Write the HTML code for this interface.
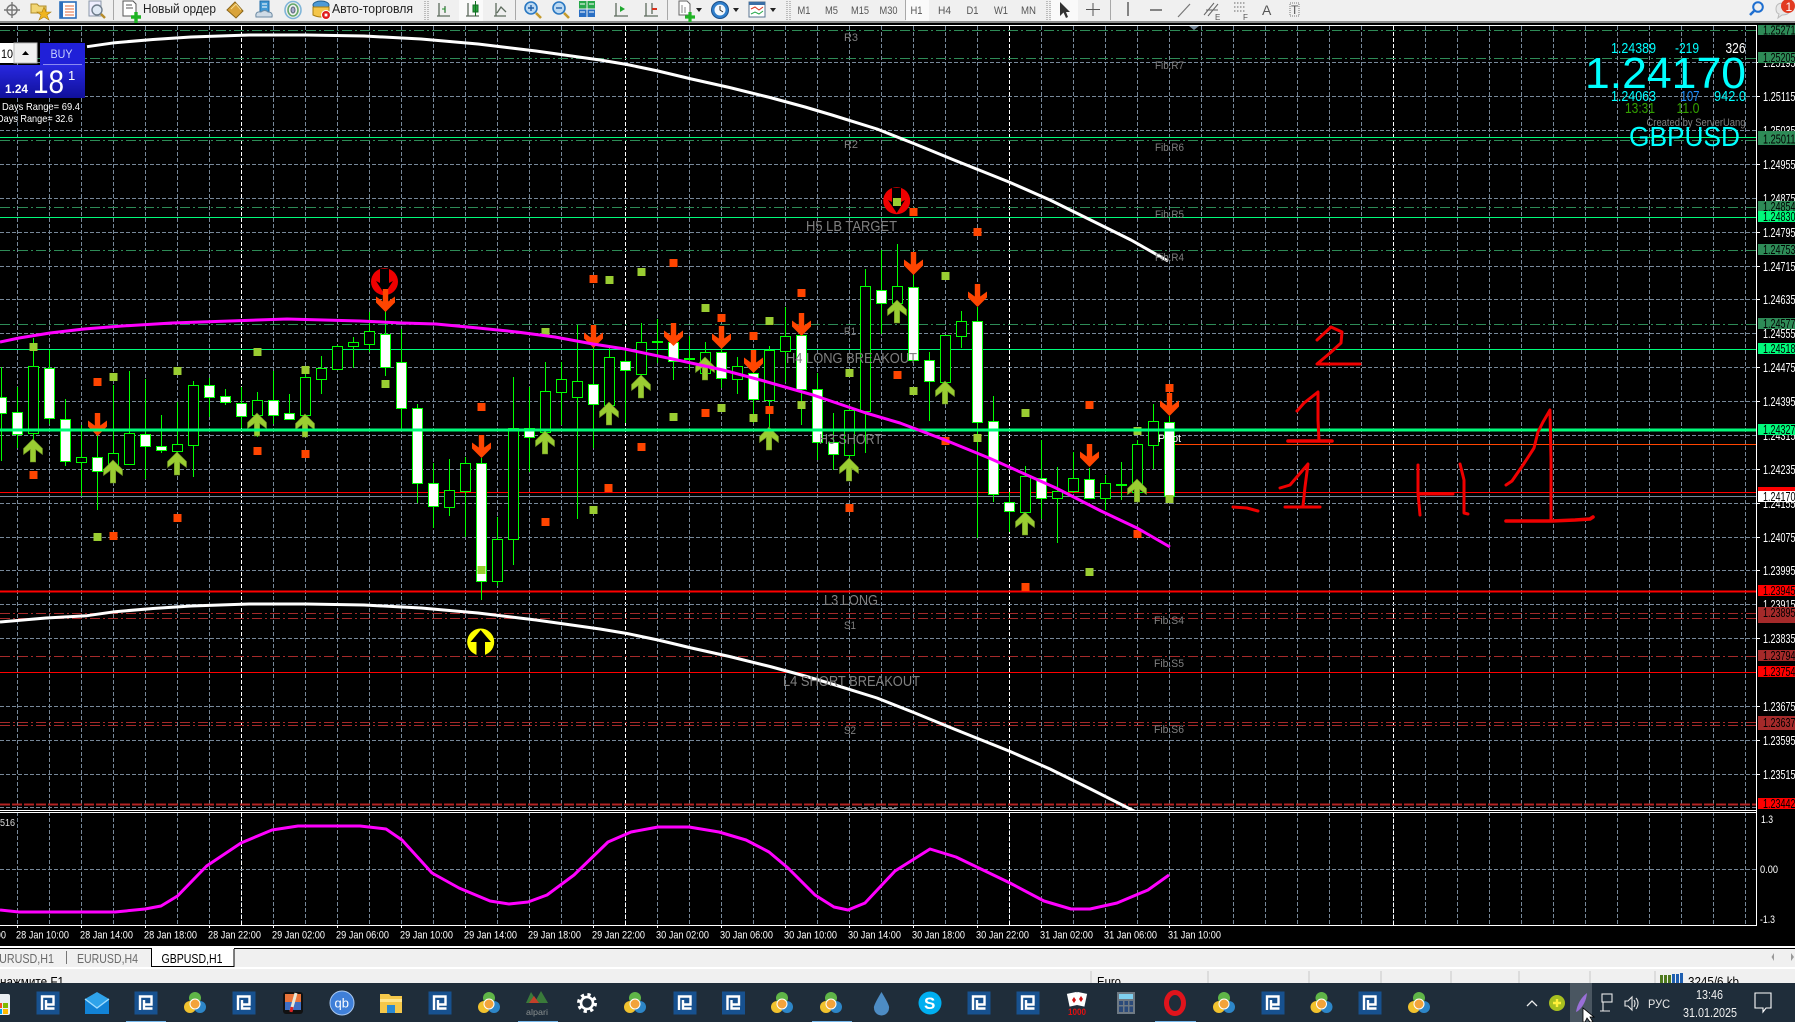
<!DOCTYPE html>
<html lang="ru">
<head>
<meta charset="utf-8">
<title>GBPUSD,H1</title>
<style>
html,body{margin:0;padding:0;background:#000;width:1795px;height:1022px;overflow:hidden}
svg{display:block}
text{font-family:"Liberation Sans","DejaVu Sans",sans-serif}
.p{fill:#fff;font-size:13px}
.b{fill:#000;font-size:13px}
.t{fill:#fff;font-size:11px}
.g{fill:#808080;font-size:11px}
.h{fill:#808080;font-size:15px}
.tb{fill:#222;font-size:13px}
.tf{fill:#555;font-size:11px}
</style>
</head>
<body>
<svg xmlns="http://www.w3.org/2000/svg" width="1795" height="1022" viewBox="0 0 1795 1022">
<defs>
<pattern id="vg" x="17" y="26" width="32" height="6" patternUnits="userSpaceOnUse"><rect width="1" height="4" fill="#778899"/></pattern>
<clipPath id="cc"><rect x="0" y="26" width="1756" height="784"/></clipPath>
<path id="dn" d="M-2.7 0H2.700V12.500L9.500 7.500V13.500L0 23L-9.500 13.500V7.500L-2.700 12.500Z" fill="#ff4500"/>
<path id="up" d="M-2.700 23H2.700V10.500L9.500 15.500V9.500L0 0L-9.500 9.500V15.500L-2.700 10.500Z" fill="#9acd32" stroke="#6b8e23" stroke-width=".6"/>
<rect id="og" x="-4" y="-4" width="8" height="8" fill="#ff4500"/>
<rect id="gr" x="-4" y="-4" width="8" height="8" fill="#9acd32"/>
<g id="rf"><rect x="-11.500" y="-11.500" width="23" height="23" fill="#17518f"/><path d="M-6 7V-6.500H5.500V1.500H-2M-2 -3V5.500H6.500" fill="none" stroke="#fff" stroke-width="2.400"/></g>
<g id="mt"><circle cx="0" cy="-5" r="6" fill="#5fb547"/><circle cx="-5" cy="4" r="6" fill="#f1c22e"/><circle cx="5" cy="4" r="6" fill="#2d86c8"/><circle cx="0" cy="1" r="5" fill="#f2a33a" stroke="#fff" stroke-width="1"/></g>
</defs>

<!-- toolbar -->
<rect x="0" y="0" width="1795" height="21" fill="#f0f0f0"/>
<rect x="0" y="21" width="1795" height="2" fill="#8a8a8a"/>
<rect x="459" y="0" width="24" height="21" fill="#fafafa"/>
<rect x="906" y="0" width="23" height="21" fill="#fafafa"/>
<rect x="1051" y="0" width="27" height="21" fill="#fafafa"/>
<g fill="none" stroke="#a8a8a8"><path d="M113.500 0V20M515.500 0V20M667.500 0V20M905.500 0V20M1110.500 0V20"/><path d="M425 1V20M428 1V20M787 1V20M790 1V20M1047 1V20M1050 1V20" stroke-dasharray="1 1" stroke="#888"/></g>
<g transform="translate(12,10)" fill="none" stroke="#777" stroke-width="1.400"><circle r="5"/><path d="M-8 0H8M0 -8V8"/></g>
<g transform="translate(40,10)"><path d="M-9 -6H-3L-1 -4H6V3H-9Z" fill="#f2d675" stroke="#b08d2a"/><path d="M4 -3L6 2L11 2L7 5L9 10L4 7L-1 10L1 5L-3 2L2 2Z" fill="#f0b51f" stroke="#a97d10" stroke-width=".6"/></g>
<g transform="translate(68,10)"><rect x="-8" y="-8" width="16" height="16" fill="#fff" stroke="#2a6ebb" stroke-width="1.600"/><rect x="-8" y="-8" width="3" height="16" fill="#2a6ebb"/><path d="M-3 -4H6M-3 -1H6M-3 2H6M-3 5H6" stroke="#e06a3b"/></g>
<g transform="translate(97,10)"><rect x="-8" y="-9" width="12" height="15" fill="#eef" stroke="#8a97a8"/><circle cx="0" cy="0" r="5" fill="#dfe9f5" stroke="#6f7d8c" stroke-width="1.400"/><path d="M4 4L8 8" stroke="#b68b2a" stroke-width="2.400"/></g>
<g transform="translate(130,10)"><path d="M-7 -9H3L6 -6V6H-7Z" fill="#fff" stroke="#555"/><path d="M-4 -5H2M-4 -2H3" stroke="#555"/><path d="M1 7H11M6 2V13" stroke="#1fb324" stroke-width="3.400"/></g>
<text x="143" y="13" class="tb" textLength="73" lengthAdjust="spacingAndGlyphs">Новый ордер</text>
<g transform="translate(235,10)"><path d="M-8 0L0 -8L8 1L1 8Z" fill="#d9a33a" stroke="#8a6518"/><path d="M-4 -1L1 -6L6 0" fill="none" stroke="#f6dc90"/></g>
<g transform="translate(264,9)"><path d="M-4 -8H5V4H-4Z" fill="#3f98d4" stroke="#1f6ca8"/><path d="M-2 -5H3M-2 -2H3" stroke="#fff"/><path d="M-8 8Q-9 2 -3 3Q1 0 4 3Q9 3 8 8Z" fill="#cfdbe6" stroke="#6c8aa3"/></g>
<g transform="translate(293,10)" fill="none"><ellipse rx="8" ry="8.500" stroke="#7fb5d8" stroke-width="1.600"/><ellipse rx="5" ry="6" stroke="#66a86a" stroke-width="1.600"/><ellipse rx="2" ry="3" fill="#aac" stroke="#567"/></g>
<g transform="translate(321,9)"><ellipse rx="8" ry="4" cy="-4" fill="#4d9ad6" stroke="#23608f"/><path d="M-8 -2H8V6Q0 10 -8 6Z" fill="#f4c64a" stroke="#a97d10"/><circle cx="5" cy="6" r="4.500" fill="#e01b1b" stroke="#fff"/><rect x="3.600" y="4.600" width="2.800" height="2.800" fill="#fff"/></g>
<text x="332" y="13" class="tb" textLength="81" lengthAdjust="spacingAndGlyphs">Авто-торговля</text>
<g fill="none" stroke="#5d6b5d" stroke-width="1.300">
<path d="M437 16H450M439 3V16M445 6V13"/><path d="M466 16H479M468 3V16"/><path d="M494 16H506M496 3V16M497 13L501 7L506 12"/>
<path d="M614 16H628M616 3V16"/><path d="M644 16H658M646 3V16M652 3V14"/></g>
<path d="M445 7V12M442 9H445" stroke="#1f8a2a" fill="none"/>
<rect x="473" y="5" width="5" height="7" fill="#23a33a" stroke="#136b22"/><path d="M475.500 1V16" stroke="#136b22"/>
<path d="M620 6L625 9L620 12Z" fill="#1fa82f"/><path d="M652 9H657" stroke="#d9331f" stroke-width="2"/>
<g transform="translate(532,9)"><circle cx="-1" cy="-1" r="6" fill="#bcd9f2" stroke="#2a78c2" stroke-width="1.600"/><path d="M-4 -1H2M-1 -4V2" stroke="#1f5fa8" stroke-width="1.400"/><path d="M4 4L9 9" stroke="#c49a2d" stroke-width="2.600"/></g>
<g transform="translate(560,9)"><circle cx="-1" cy="-1" r="6" fill="#bcd9f2" stroke="#2a78c2" stroke-width="1.600"/><path d="M-4 -1H2" stroke="#1f5fa8" stroke-width="1.400"/><path d="M4 4L9 9" stroke="#c49a2d" stroke-width="2.600"/></g>
<g transform="translate(587,9)"><rect x="-8" y="-8" width="7.500" height="7.500" fill="#27a84a"/><rect x=".5" y="-8" width="7.500" height="7.500" fill="#27a84a"/><rect x="-8" y=".5" width="7.500" height="7.500" fill="#2a6fc4"/><rect x=".5" y=".5" width="7.500" height="7.500" fill="#2a6fc4"/><path d="M-7 -5H-2M2 -5H7M-7 3H-2M2 3H7" stroke="#fff"/></g>
<g transform="translate(685,9)"><path d="M-6 -8H2L5 -5V6H-6Z" fill="#fff" stroke="#666"/><path d="M-3 -4V4M0 -2V4" stroke="#888"/><path d="M0 8H10M5 3V13" stroke="#1fb324" stroke-width="3.200"/></g>
<path d="M696 8H702L699 12Z" fill="#222"/>
<g transform="translate(720,10)"><circle r="8.500" fill="#2f7fcc" stroke="#1b4f8a"/><circle r="5.500" fill="#f4f8fc"/><path d="M0 -4V0L3 2" stroke="#333" fill="none"/></g>
<path d="M733 8H739L736 12Z" fill="#222"/>
<g transform="translate(757,10)"><rect x="-8" y="-8" width="16" height="15" fill="#fff" stroke="#5a7590"/><rect x="-8" y="-8" width="16" height="3" fill="#3a6ea5"/><path d="M-6 -1L-2 -3L2 0L6 -3" stroke="#d9331f" fill="none"/><path d="M-6 4L-2 2L2 4L6 1" stroke="#27a84a" fill="none"/></g>
<path d="M770 8H776L773 12Z" fill="#222"/>
<text x="797.500" y="14" class="tf" textLength="13" lengthAdjust="spacingAndGlyphs">M1</text>
<text x="825" y="14" class="tf" textLength="13" lengthAdjust="spacingAndGlyphs">M5</text>
<text x="851" y="14" class="tf" textLength="18" lengthAdjust="spacingAndGlyphs">M15</text>
<text x="879.500" y="14" class="tf" textLength="18" lengthAdjust="spacingAndGlyphs">M30</text>
<text x="910.500" y="14" class="tf" textLength="12" lengthAdjust="spacingAndGlyphs">H1</text>
<text x="938" y="14" class="tf" textLength="13" lengthAdjust="spacingAndGlyphs">H4</text>
<text x="966.500" y="14" class="tf" textLength="12" lengthAdjust="spacingAndGlyphs">D1</text>
<text x="994" y="14" class="tf" textLength="14" lengthAdjust="spacingAndGlyphs">W1</text>
<text x="1021" y="14" class="tf" textLength="15" lengthAdjust="spacingAndGlyphs">MN</text>
<path d="M1060 2V16L1063.500 12.500L1066 18L1068 17L1066 12H1070Z" fill="#333"/>
<path d="M1093 3V16M1086 9.500H1100" stroke="#555" fill="none"/>
<path d="M1128 2V16" stroke="#555" stroke-width="1.400"/>
<path d="M1150 10H1162" stroke="#555" stroke-width="1.400"/>
<path d="M1178 17L1190 4" stroke="#777" stroke-width="1.200"/>
<path d="M1204 15L1214 3M1208 16L1218 4M1206 10L1218 10" stroke="#666" fill="none"/><text x="1215" y="20" fill="#555" font-size="8">E</text>
<path d="M1234 3H1246M1234 7H1246M1234 11H1246" stroke="#666" stroke-dasharray="1.500 1.500"/><text x="1243" y="20" fill="#555" font-size="8">F</text>
<text x="1262" y="15" fill="#555" font-size="14">A</text>
<rect x="1290" y="3" width="9" height="13" fill="none" stroke="#777" stroke-dasharray="1 1"/><text x="1291" y="14" fill="#555" font-size="12">T</text>
<g transform="translate(1757,8)"><circle cx="1" cy="-1" r="4.800" fill="none" stroke="#1f6fd0" stroke-width="2"/><path d="M-3 3L-7 7" stroke="#1f6fd0" stroke-width="2.600"/></g>
<path d="M1776 9Q1776 3 1783 3Q1790 3 1790 9Q1790 15 1782 15L1778 18L1779 14Q1776 13 1776 9Z" fill="#e8e8e8" stroke="#bbb"/>
<circle cx="1788" cy="6" r="7" fill="#e23b22"/><text x="1785.500" y="11" fill="#fff" font-size="12">1</text>

<!-- chart -->
<rect x="0" y="23" width="1795" height="925" fill="#000"/>
<rect x="0" y="26" width="1756" height="784" fill="url(#vg)"/>
<rect x="0" y="813" width="1756" height="112" fill="url(#vg)"/>
<g stroke="#fff" stroke-dasharray="4 2"><path d="M241.500 26V810M625.500 26V810M1009.500 26V810M1393.500 26V810M241.500 813V925M625.500 813V925M1009.500 813V925M1393.500 813V925"/></g>
<path d="M0 62.500H1756M0 96.500H1756M0 130.500H1756M0 164.500H1756M0 198.500H1756M0 232.500H1756M0 266.500H1756M0 299.500H1756M0 333.500H1756M0 367.500H1756M0 401.500H1756M0 435.500H1756M0 469.500H1756M0 503.500H1756M0 537.500H1756M0 570.500H1756M0 604.500H1756M0 638.500H1756M0 672.500H1756M0 706.500H1756M0 740.500H1756M0 774.500H1756M0 807.500H1756M0 869.500H1756" stroke="#778899" stroke-dasharray="4 2" fill="none"/>
<g fill="none" stroke="#2e8b57" stroke-dasharray="10 3 2 3"><path d="M0 30.500H1756M0 58.500H1756M0 140.500H1756M0 207.500H1756M0 250.500H1756M0 324.500H1756"/></g>
<g fill="none" stroke="#00fa7a"><path d="M0 137.500H1756M0 217.500H1756M0 349.500H1756"/></g>
<path d="M1174 444.500H1756" stroke="#ff4500" fill="none"/>
<path d="M0 492.500H1756" stroke="#ff0000" fill="none"/>
<path d="M0 496.500H1756" stroke="#778899" fill="none"/>
<path d="M0 672.500H1756" stroke="#ff0000" fill="none"/>
<path d="M0 591.500H1756" stroke="#ff0000" stroke-width="2" fill="none"/>
<g fill="none" stroke="#a52a2a" stroke-dasharray="10 3 2 3"><path d="M0 613.500H1756M0 618.500H1756M0 656.500H1756M0 722.500H1756M0 725.500H1756"/></g>
<path d="M0 804.500H1756" stroke="#b22222" stroke-width="2" stroke-dasharray="10 2" fill="none"/>
<path d="M0 810.500H1756M0 812.500H1756M0 925.500H1757M0 25.500H1757M1756.500 25V925" stroke="#fff" fill="none"/>
<path d="M1189 26H1199L1194 30Z" fill="#778899"/>

<!-- candles: wicks -->
<path stroke="#00ff00" fill="none" d="M1.500 367V461M17.500 387V448M33.500 338V440M49.500 350V424M65.500 399V466M81.500 425V496M97.500 433V510M113.500 385V473M129.500 371V464M145.500 379V479M161.500 415V453M177.500 402V457M193.500 381V477M209.500 378V417M225.500 389V405M241.500 387V428M257.500 392V437M273.500 371V424M289.500 394V419M305.500 366V437M321.500 356V394M337.500 345V369M353.500 337V368M369.500 312V352M385.500 305V376M401.500 329V430M417.500 404V503M433.500 463V528M449.500 459V516M465.500 457V537M481.500 458V600M497.500 517V586M513.500 377V565M529.500 387V472M545.500 362V453M561.500 362V425M577.500 325V519M593.500 348V448M609.500 345V425M625.500 350V423M641.500 323V393M657.500 319V363M673.500 333V380M689.500 336V370M705.500 342V380M721.500 340V388M737.500 357V394M753.500 350V423M769.500 346V427M785.500 307V382M801.500 327V425M817.500 373V460M833.500 413V470M849.500 405V470M865.500 269V453M881.500 250V334M897.500 244V313M913.500 275V360M929.500 352V421M945.500 335V403M961.500 311V348M977.500 307V538M993.500 396V502M1009.500 492V532M1025.500 466V512M1041.500 440V519M1057.500 467V543M1073.500 452V493M1089.500 468V498M1105.500 475V510M1121.500 462V500M1137.500 440V500M1153.500 404V469M1169.500 416V497"/>
<path fill="#fff" stroke="#00ff00" d="M-3.500 397.500h10v16h-10zM12.500 412.500h10v22h-10zM44.500 368.500h10v50h-10zM60.500 419.500h10v42h-10zM92.500 457.500h10v14h-10zM140.500 434.500h10v12h-10zM156.500 446.500h10v4h-10zM204.500 385.500h10v12h-10zM220.500 396.500h10v6h-10zM236.500 403.500h10v13h-10zM268.500 400.500h10v15h-10zM284.500 413.500h10v6h-10zM380.500 334.500h10v33h-10zM396.500 362.500h10v46h-10zM412.500 408.500h10v75h-10zM428.500 483.500h10v23h-10zM476.500 463.500h10v118h-10zM524.500 428.500h10v9h-10zM588.500 384.500h10v20h-10zM620.500 361.500h10v9h-10zM668.500 342.500h10v19h-10zM716.500 352.500h10v26h-10zM748.500 373.500h10v26h-10zM796.500 335.500h10v54h-10zM812.500 389.500h10v53h-10zM828.500 442.500h10v12h-10zM876.500 290.500h10v13h-10zM908.500 287.500h10v73h-10zM924.500 360.500h10v21h-10zM972.500 321.500h10v101h-10zM988.500 421.500h10v73h-10zM1004.500 502.500h10v9h-10zM1036.500 478.500h10v20h-10zM1084.500 479.500h10v19h-10zM1164.500 422.500h10v74h-10z"/>
<path fill="#000" stroke="#00ff00" d="M28.500 366.500h10v67h-10zM76.500 457.500h10v5h-10zM108.500 453.500h10v17h-10zM124.500 433.500h10v31h-10zM172.500 444.500h10v7h-10zM188.500 385.500h10v60h-10zM252.500 400.500h10v15h-10zM300.500 377.500h10v38h-10zM316.500 368.500h10v11h-10zM332.500 346.500h10v23h-10zM348.500 342.500h10v4h-10zM364.500 331.500h10v13h-10zM444.500 490.500h10v17h-10zM460.500 463.500h10v28h-10zM492.500 539.500h10v42h-10zM508.500 428.500h10v111h-10zM540.500 391.500h10v41h-10zM556.500 379.500h10v13h-10zM572.500 381.500h10v16h-10zM604.500 357.500h10v48h-10zM636.500 342.500h10v32h-10zM652.500 341.500h10v1h-10zM684.500 358.500h10v1h-10zM700.500 352.500h10v21h-10zM732.500 366.500h10v13h-10zM764.500 350.500h10v50h-10zM780.500 336.500h10v15h-10zM844.500 410.500h10v45h-10zM860.500 286.500h10v125h-10zM892.500 286.500h10v17h-10zM940.500 335.500h10v47h-10zM956.500 321.500h10v15h-10zM1020.500 476.500h10v36h-10zM1052.500 491.500h10v7h-10zM1068.500 478.500h10v13h-10zM1100.500 483.500h10v15h-10zM1116.500 484.500h10v1h-10zM1132.500 444.500h10v48h-10zM1148.500 421.500h10v24h-10z"/>

<!-- dots -->
<g>
<use href="#gr" x="33.500" y="347"/><use href="#gr" x="257.500" y="352"/><use href="#gr" x="113.500" y="377"/><use href="#gr" x="177.500" y="371"/><use href="#gr" x="305.500" y="370"/><use href="#gr" x="385.500" y="384"/><use href="#gr" x="97.500" y="537"/><use href="#gr" x="545.500" y="332"/><use href="#gr" x="481.500" y="570"/><use href="#gr" x="593.500" y="510"/><use href="#gr" x="609.500" y="280"/><use href="#gr" x="641.500" y="272"/><use href="#gr" x="945.500" y="276"/><use href="#gr" x="705.500" y="308"/><use href="#gr" x="769.500" y="321"/><use href="#gr" x="849.500" y="373"/><use href="#gr" x="913.500" y="391"/><use href="#gr" x="721.500" y="408"/><use href="#gr" x="673.500" y="417"/><use href="#gr" x="753.500" y="418"/><use href="#gr" x="801.500" y="405"/><use href="#gr" x="1025.500" y="413"/><use href="#gr" x="1137.500" y="431"/><use href="#gr" x="977.500" y="438"/><use href="#gr" x="1089.500" y="572"/><use href="#gr" x="1169.500" y="499"/>
<use href="#og" x="97.500" y="382"/><use href="#og" x="257.500" y="451"/><use href="#og" x="305.500" y="454"/><use href="#og" x="481.500" y="407"/><use href="#og" x="33.500" y="475"/><use href="#og" x="177.500" y="518"/><use href="#og" x="113.500" y="536"/><use href="#og" x="545.500" y="522"/><use href="#og" x="608.500" y="488"/><use href="#og" x="913.500" y="212"/><use href="#og" x="977.500" y="232"/><use href="#og" x="673.500" y="263"/><use href="#og" x="593.500" y="279"/><use href="#og" x="801.500" y="293"/><use href="#og" x="721.500" y="318"/><use href="#og" x="753.500" y="336"/><use href="#og" x="897.500" y="375"/><use href="#og" x="705.500" y="413"/><use href="#og" x="769.500" y="410"/><use href="#og" x="641.500" y="447"/><use href="#og" x="1089.500" y="405"/><use href="#og" x="1169.500" y="388"/><use href="#og" x="945.500" y="441"/><use href="#og" x="1137.500" y="534"/><use href="#og" x="1025.500" y="587"/><use href="#og" x="849.500" y="508"/>
</g>

<!-- circles -->
<circle cx="384.500" cy="281.700" r="13.500" fill="#f00000"/><path d="M380 269H389V283L393 281L384.500 294L376 281L380 283Z" fill="#000"/>
<circle cx="896.700" cy="200.700" r="13.500" fill="#f00000"/><path d="M892 188H901V202L905 200L896.700 213L888 200L892 202Z" fill="#000"/>
<use href="#gr" x="897" y="202"/>
<circle cx="480.700" cy="642" r="13.500" fill="#ffff00"/><path d="M476.500 656V642H470.500L480.700 630L491 642H485V656Z" fill="#000"/>

<!-- arrows -->
<g>
<use href="#dn" x="97.500" y="413"/><use href="#dn" x="385.500" y="289"/><use href="#dn" x="481.500" y="435"/><use href="#dn" x="593.500" y="325"/><use href="#dn" x="673.500" y="323"/><use href="#dn" x="721.500" y="326"/><use href="#dn" x="753.500" y="350"/><use href="#dn" x="801.500" y="313"/><use href="#dn" x="913.500" y="252"/><use href="#dn" x="977.500" y="284"/><use href="#dn" x="1089.500" y="444"/><use href="#dn" x="1169.500" y="393"/>
<use href="#up" x="33" y="439"/><use href="#up" x="113" y="460"/><use href="#up" x="177" y="452"/><use href="#up" x="257" y="413"/><use href="#up" x="305" y="414"/><use href="#up" x="545" y="431"/><use href="#up" x="609" y="402"/><use href="#up" x="641" y="375"/><use href="#up" x="705" y="357"/><use href="#up" x="769" y="427"/><use href="#up" x="849" y="458"/><use href="#up" x="897" y="300"/><use href="#up" x="945" y="381"/><use href="#up" x="1025" y="512"/><use href="#up" x="1137" y="479"/>
</g>

<path d="M0 430H1756" stroke="#00fa7a" stroke-width="3" fill="none"/>

<!-- curves -->
<g clip-path="url(#cc)" fill="none" stroke-linejoin="round">
<polyline stroke="#fff" stroke-width="3" points="87,46.700 115,42.700 153,39.500 191,37 249,35 306,35 364,36 421,39 478,44 536,51 600,60 627,64.500 658,71 691.500,79 729.500,87.500 770,97.500 805,107 832,115 877,129 915,144 954,160 1009,182 1050,200 1090.600,220 1131,240 1168,261"/>
<polyline stroke="#fff" stroke-width="3" points="0,622 46,618 87,615.700 115,611.700 153,608.500 191,606 249,604 306,604 364,605 421,608 478,613 536,620 600,629 627,633.500 658,640 691.500,648 729.500,656.500 770,666.500 805,676 832,684 877,698 915,713 954,729 1009,751 1050,769 1090.600,789 1140,814"/>
<polyline stroke="#ff00ff" stroke-width="3" points="0,342 19,338 50,333 84,329 122,326 172,323 230,321 287,319 360,321 402,323 436,324 478,328 517,332 555,337 593,344 625,349 682,361 723,370 764,381 813,395 866,413 900,423 945,440 989,458 1056,488 1101,511 1137,528 1170,547"/>
</g>
<polyline fill="none" stroke="#ff00ff" stroke-width="3" stroke-linejoin="round" points="0,910 19,912 115,912 145,909 161,906 177.500,896 206.600,866 241,843 272,830 298,826 360,826 386,829 402,840 432,873 459,888 490,901 509,904 528,902 547,895 574,875 608,842 631,832 658,827 689,827 719,832 746,840 769,852 788,868 815,895 834,907 848,910 865,903 895,871 930,849 956,857 1010,883 1044,901 1071,909 1090,909 1117,903 1148,890 1169,875"/>

<!-- chart text labels -->
<g clip-path="url(#cc)">
<text x="844" y="41" class="g" textLength="14" lengthAdjust="spacingAndGlyphs">R3</text>
<text x="1155" y="69" class="g" textLength="29" lengthAdjust="spacingAndGlyphs">Fib.R7</text>
<text x="844" y="148" class="g" textLength="14" lengthAdjust="spacingAndGlyphs">R2</text>
<text x="1155" y="151" class="g" textLength="29" lengthAdjust="spacingAndGlyphs">Fib.R6</text>
<text x="1155" y="218" class="g" textLength="29" lengthAdjust="spacingAndGlyphs">Fib.R5</text>
<text x="806" y="231" class="h" textLength="91" lengthAdjust="spacingAndGlyphs">H5 LB TARGET</text>
<text x="1155" y="261" class="g" textLength="29" lengthAdjust="spacingAndGlyphs">Fib.R4</text>
<text x="844" y="335" class="g" textLength="12" lengthAdjust="spacingAndGlyphs">R1</text>
<text x="786" y="363" class="h" textLength="131" lengthAdjust="spacingAndGlyphs">H4 LONG BREAKOUT</text>
<text x="819" y="444" class="h" textLength="63" lengthAdjust="spacingAndGlyphs">H3 SHORT</text>
<text x="1158" y="442" fill="#fff" font-size="11" textLength="23" lengthAdjust="spacingAndGlyphs">Pivot</text>
<text x="824" y="605" class="h" textLength="54" lengthAdjust="spacingAndGlyphs">L3 LONG</text>
<text x="844" y="629" class="g" textLength="12" lengthAdjust="spacingAndGlyphs">S1</text>
<text x="1154" y="624" class="g" textLength="30" lengthAdjust="spacingAndGlyphs">Fib.S4</text>
<text x="1154" y="667" class="g" textLength="30" lengthAdjust="spacingAndGlyphs">Fib.S5</text>
<text x="783" y="686" class="h" textLength="137" lengthAdjust="spacingAndGlyphs">L4 SHORT BREAKOUT</text>
<text x="844" y="734" class="g" textLength="12" lengthAdjust="spacingAndGlyphs">S2</text>
<text x="1154" y="733" class="g" textLength="30" lengthAdjust="spacingAndGlyphs">Fib.S6</text>
<text x="806" y="818" class="h" textLength="91" lengthAdjust="spacingAndGlyphs">L5 LB TARGET</text>
<text x="1154" y="818" class="g" textLength="30" lengthAdjust="spacingAndGlyphs">Fib.S7</text>
</g>

<!-- handwritten -->
<g fill="none" stroke="#f00000" stroke-width="3" stroke-linecap="round" stroke-linejoin="round">
<path d="M1317 340L1331 327L1342 332L1341 343L1330 353L1317 364L1340 364L1360 364"/>
<path d="M1297 411L1304 403L1318 392L1318 420L1319 441"/><path d="M1288 441H1332" stroke-width="3.600"/>
<path d="M1233 507L1247 508L1258 511"/>
<path d="M1280 488L1290 485L1308 464L1305 487L1303 506"/><path d="M1285 507H1320"/>
<path d="M1418 465V493L1420 515"/><path d="M1418 494H1453"/><path d="M1460 464L1464 480V505L1464 513L1468 514"/>
<path d="M1506 485L1512 481L1523 465L1534 448L1538 432L1543 422L1550 410L1551 460L1551 520"/><path d="M1506 521H1552L1575 520L1590 519L1593 517" stroke-width="3.600"/>
</g>

<!-- right axis labels -->
<text x="1763" y="67" class="p" textLength="32.500" lengthAdjust="spacingAndGlyphs">1.25195</text>
<text x="1763" y="101" class="p" textLength="32.500" lengthAdjust="spacingAndGlyphs">1.25115</text>
<text x="1763" y="135" class="p" textLength="32.500" lengthAdjust="spacingAndGlyphs">1.25035</text>
<text x="1763" y="169" class="p" textLength="32.500" lengthAdjust="spacingAndGlyphs">1.24955</text>
<text x="1763" y="203" class="p" textLength="32.500" lengthAdjust="spacingAndGlyphs">1.24875</text>
<text x="1763" y="237" class="p" textLength="32.500" lengthAdjust="spacingAndGlyphs">1.24795</text>
<text x="1763" y="271" class="p" textLength="32.500" lengthAdjust="spacingAndGlyphs">1.24715</text>
<text x="1763" y="304" class="p" textLength="32.500" lengthAdjust="spacingAndGlyphs">1.24635</text>
<text x="1763" y="338" class="p" textLength="32.500" lengthAdjust="spacingAndGlyphs">1.24555</text>
<text x="1763" y="372" class="p" textLength="32.500" lengthAdjust="spacingAndGlyphs">1.24475</text>
<text x="1763" y="406" class="p" textLength="32.500" lengthAdjust="spacingAndGlyphs">1.24395</text>
<text x="1763" y="440" class="p" textLength="32.500" lengthAdjust="spacingAndGlyphs">1.24315</text>
<text x="1763" y="474" class="p" textLength="32.500" lengthAdjust="spacingAndGlyphs">1.24235</text>
<text x="1763" y="508" class="p" textLength="32.500" lengthAdjust="spacingAndGlyphs">1.24155</text>
<text x="1763" y="542" class="p" textLength="32.500" lengthAdjust="spacingAndGlyphs">1.24075</text>
<text x="1763" y="575" class="p" textLength="32.500" lengthAdjust="spacingAndGlyphs">1.23995</text>
<text x="1763" y="609" class="p" textLength="32.500" lengthAdjust="spacingAndGlyphs">1.23915</text>
<text x="1763" y="643" class="p" textLength="32.500" lengthAdjust="spacingAndGlyphs">1.23835</text>
<text x="1763" y="711" class="p" textLength="32.500" lengthAdjust="spacingAndGlyphs">1.23675</text>
<text x="1763" y="745" class="p" textLength="32.500" lengthAdjust="spacingAndGlyphs">1.23595</text>
<text x="1763" y="779" class="p" textLength="32.500" lengthAdjust="spacingAndGlyphs">1.23515</text>
<path d="M1757 62.500H1760M1757 96.500H1760M1757 164.500H1760M1757 232.500H1760M1757 266.500H1760M1757 299.500H1760M1757 367.500H1760M1757 401.500H1760M1757 469.500H1760M1757 503.500H1760M1757 537.500H1760M1757 570.500H1760M1757 638.500H1760M1757 706.500H1760M1757 740.500H1760M1757 774.500H1760" stroke="#fff"/>
<rect x="1758" y="25" width="37" height="10" fill="#2e8b57"/><text x="1763" y="34.500" class="b" textLength="32.500" lengthAdjust="spacingAndGlyphs">1.25271</text>
<rect x="1758" y="52" width="37" height="11" fill="#2e8b57"/><text x="1763" y="62" class="b" textLength="32.500" lengthAdjust="spacingAndGlyphs">1.25205</text>
<rect x="1758" y="131" width="37" height="14" fill="#2e8b57"/><text x="1763" y="143.500" class="b" textLength="32.500" lengthAdjust="spacingAndGlyphs">1.25011</text>
<rect x="1758" y="201" width="37" height="11" fill="#2e8b57"/><text x="1763" y="211" class="b" textLength="32.500" lengthAdjust="spacingAndGlyphs">1.24854</text>
<rect x="1758" y="211" width="37" height="11" fill="#00fa7a"/><text x="1763" y="221" class="b" textLength="32.500" lengthAdjust="spacingAndGlyphs">1.24830</text>
<rect x="1758" y="244" width="37" height="11" fill="#2e8b57"/><text x="1763" y="254" class="b" textLength="32.500" lengthAdjust="spacingAndGlyphs">1.24753</text>
<rect x="1758" y="318" width="37" height="11" fill="#2e8b57"/><text x="1763" y="328" class="b" textLength="32.500" lengthAdjust="spacingAndGlyphs">1.24577</text>
<rect x="1758" y="343" width="37" height="11" fill="#00fa7a"/><text x="1763" y="353" class="b" textLength="32.500" lengthAdjust="spacingAndGlyphs">1.24518</text>
<rect x="1758" y="424" width="37" height="11" fill="#00fa7a"/><text x="1763" y="434" class="b" textLength="32.500" lengthAdjust="spacingAndGlyphs">1.24327</text>
<rect x="1758" y="487" width="37" height="5" fill="#ff0000"/>
<rect x="1758" y="491" width="37" height="11" fill="#fff"/><text x="1763" y="501" class="b" textLength="32.500" lengthAdjust="spacingAndGlyphs">1.24170</text>
<rect x="1758" y="585" width="37" height="11" fill="#ff0000"/><text x="1763" y="595" class="b" textLength="32.500" lengthAdjust="spacingAndGlyphs">1.23945</text>
<rect x="1758" y="607" width="37" height="16" fill="#a52a2a"/><text x="1763" y="617" class="b" textLength="32.500" lengthAdjust="spacingAndGlyphs">1.23895</text>
<rect x="1758" y="650" width="37" height="11" fill="#a52a2a"/><text x="1763" y="660" class="b" textLength="32.500" lengthAdjust="spacingAndGlyphs">1.23794</text>
<rect x="1758" y="666" width="37" height="11" fill="#ff0000"/><text x="1763" y="676" class="b" textLength="32.500" lengthAdjust="spacingAndGlyphs">1.23754</text>
<rect x="1758" y="716" width="37" height="14" fill="#a52a2a"/><text x="1763" y="727" class="b" textLength="32.500" lengthAdjust="spacingAndGlyphs">1.23637</text>
<rect x="1758" y="798" width="37" height="11" fill="#ff0000"/><text x="1763" y="808" class="b" textLength="32.500" lengthAdjust="spacingAndGlyphs">1.23442</text>
<text x="1761" y="823" class="t" textLength="12" lengthAdjust="spacingAndGlyphs">1.3</text>
<text x="1760" y="873" class="t" textLength="18" lengthAdjust="spacingAndGlyphs">0.00</text>
<text x="1760" y="923" class="t" textLength="15" lengthAdjust="spacingAndGlyphs">-1.3</text>
<text x="0" y="826" fill="#ddd" font-size="10" textLength="15" lengthAdjust="spacingAndGlyphs">516</text>

<!-- top right info -->
<g font-size="15">
<text x="1611" y="53" fill="#00ffff" textLength="45" lengthAdjust="spacingAndGlyphs">1.24389</text>
<text x="1675" y="53" fill="#00ffff" textLength="24" lengthAdjust="spacingAndGlyphs">-219</text>
<text x="1725.500" y="53" fill="#fff" textLength="20" lengthAdjust="spacingAndGlyphs">326</text>
<text x="1585" y="88" fill="#00ffff" font-size="44" textLength="161" lengthAdjust="spacingAndGlyphs">1.24170</text>
<text x="1611" y="101" fill="#00ffff" textLength="45" lengthAdjust="spacingAndGlyphs">1.24063</text>
<text x="1680.500" y="101" fill="#1e90ff" textLength="19" lengthAdjust="spacingAndGlyphs">107</text>
<text x="1714" y="101" fill="#00ffff" textLength="32" lengthAdjust="spacingAndGlyphs">942.0</text>
<text x="1625" y="113" fill="#32a000" textLength="30" lengthAdjust="spacingAndGlyphs">13:31</text>
<text x="1676.500" y="113" fill="#32a000" textLength="23" lengthAdjust="spacingAndGlyphs">11.0</text>
<text x="1646.500" y="126" fill="#808080" font-size="11" textLength="99" lengthAdjust="spacingAndGlyphs">Created by ServerUang</text>
<text x="1629" y="146" fill="#00ffff" font-size="28" textLength="111" lengthAdjust="spacingAndGlyphs">GBPUSD</text>
</g>

<!-- left panel -->
<rect x="0" y="43" width="14" height="20" fill="#fff"/>
<text x="1" y="58" fill="#000" font-size="12" textLength="12" lengthAdjust="spacingAndGlyphs">10</text>
<rect x="14" y="43" width="23" height="20" fill="#f0f0f0" stroke="#bbb"/>
<path d="M22 55H29L25.500 51Z" fill="#000"/>
<rect x="40" y="43" width="45" height="22" fill="#2020d8"/>
<rect x="43" y="64" width="39" height="1" fill="#8a8af0"/>
<text x="50.500" y="58" fill="#c8d0ff" font-size="12" textLength="22" lengthAdjust="spacingAndGlyphs">BUY</text>
<defs><linearGradient id="bl" x1="0" y1="0" x2="0" y2="1"><stop offset="0" stop-color="#2828e0"/><stop offset="1" stop-color="#10109a"/></linearGradient></defs>
<rect x="0" y="65" width="85" height="33" fill="url(#bl)"/>
<text x="5" y="93" fill="#fff" font-size="12" font-weight="bold" textLength="23" lengthAdjust="spacingAndGlyphs">1.24</text>
<text x="33" y="93" fill="#fff" font-size="32" textLength="31" lengthAdjust="spacingAndGlyphs">18</text>
<text x="68" y="80" fill="#fff" font-size="13">1</text>
<text x="2" y="110" fill="#fff" font-size="10.500" textLength="78" lengthAdjust="spacingAndGlyphs">Days Range= 69.4</text>
<text x="-3" y="122" fill="#fff" font-size="10.500" textLength="76" lengthAdjust="spacingAndGlyphs">Days Range= 32.6</text>

<!-- time axis -->
<path d="M17.500 925V928M81.500 925V928M145.500 925V928M209.500 925V928M273.500 925V928M337.500 925V928M401.500 925V928M465.500 925V928M529.500 925V928M593.500 925V928M657.500 925V928M721.500 925V928M785.500 925V928M849.500 925V928M913.500 925V928M977.500 925V928M1041.500 925V928M1105.500 925V928M1169.500 925V928" stroke="#fff"/>
<text x="-47" y="938.500" class="t" textLength="53" lengthAdjust="spacingAndGlyphs">28 Jan 06:00</text>
<text x="16" y="938.500" class="t" textLength="53" lengthAdjust="spacingAndGlyphs">28 Jan 10:00</text>
<text x="80" y="938.500" class="t" textLength="53" lengthAdjust="spacingAndGlyphs">28 Jan 14:00</text>
<text x="144" y="938.500" class="t" textLength="53" lengthAdjust="spacingAndGlyphs">28 Jan 18:00</text>
<text x="208" y="938.500" class="t" textLength="53" lengthAdjust="spacingAndGlyphs">28 Jan 22:00</text>
<text x="272" y="938.500" class="t" textLength="53" lengthAdjust="spacingAndGlyphs">29 Jan 02:00</text>
<text x="336" y="938.500" class="t" textLength="53" lengthAdjust="spacingAndGlyphs">29 Jan 06:00</text>
<text x="400" y="938.500" class="t" textLength="53" lengthAdjust="spacingAndGlyphs">29 Jan 10:00</text>
<text x="464" y="938.500" class="t" textLength="53" lengthAdjust="spacingAndGlyphs">29 Jan 14:00</text>
<text x="528" y="938.500" class="t" textLength="53" lengthAdjust="spacingAndGlyphs">29 Jan 18:00</text>
<text x="592" y="938.500" class="t" textLength="53" lengthAdjust="spacingAndGlyphs">29 Jan 22:00</text>
<text x="656" y="938.500" class="t" textLength="53" lengthAdjust="spacingAndGlyphs">30 Jan 02:00</text>
<text x="720" y="938.500" class="t" textLength="53" lengthAdjust="spacingAndGlyphs">30 Jan 06:00</text>
<text x="784" y="938.500" class="t" textLength="53" lengthAdjust="spacingAndGlyphs">30 Jan 10:00</text>
<text x="848" y="938.500" class="t" textLength="53" lengthAdjust="spacingAndGlyphs">30 Jan 14:00</text>
<text x="912" y="938.500" class="t" textLength="53" lengthAdjust="spacingAndGlyphs">30 Jan 18:00</text>
<text x="976" y="938.500" class="t" textLength="53" lengthAdjust="spacingAndGlyphs">30 Jan 22:00</text>
<text x="1040" y="938.500" class="t" textLength="53" lengthAdjust="spacingAndGlyphs">31 Jan 02:00</text>
<text x="1104" y="938.500" class="t" textLength="53" lengthAdjust="spacingAndGlyphs">31 Jan 06:00</text>
<text x="1168" y="938.500" class="t" textLength="53" lengthAdjust="spacingAndGlyphs">31 Jan 10:00</text>

<!-- tabs + status -->
<rect x="0" y="946" width="1795" height="2" fill="#fff"/>
<rect x="0" y="948" width="1795" height="1" fill="#000"/>
<rect x="0" y="949" width="1795" height="18" fill="#f0f0f0"/>
<rect x="0" y="967" width="1795" height="2" fill="#fff"/>
<rect x="0" y="969" width="1795" height="14" fill="#f0f0f0"/>
<text x="-8" y="963" fill="#6a6a6a" font-size="12.500" textLength="62" lengthAdjust="spacingAndGlyphs">EURUSD,H1</text>
<path d="M66.500 951V964" stroke="#777"/>
<text x="77" y="963" fill="#6a6a6a" font-size="12.500" textLength="61" lengthAdjust="spacingAndGlyphs">EURUSD,H4</text>
<path d="M151.500 948.500V966.500H234V948.500" fill="#fff" stroke="#000"/>
<rect x="152" y="948" width="82" height="1" fill="#fff"/>
<text x="161.500" y="963" fill="#000" font-size="12.500" textLength="61" lengthAdjust="spacingAndGlyphs">GBPUSD,H1</text>
<path d="M1774 953V961L1771.500 957ZM1791 953V961L1794 957Z" fill="#999"/>
<text x="0" y="986" fill="#000" font-size="12.500" textLength="64" lengthAdjust="spacingAndGlyphs">нажмите F1</text>
<path d="M1091 971V983M1208 971V983M1309 971V983M1381 971V983M1451 971V983M1519 971V983M1590 971V983M1655 971V983" stroke="#c8c8c8"/>
<text x="1097" y="986" fill="#000" font-size="12.500" textLength="24" lengthAdjust="spacingAndGlyphs">Euro</text>
<g fill="#4f7a1f"><rect x="1660" y="975" width="3" height="8"/><rect x="1664" y="975" width="3" height="8"/><rect x="1668" y="975" width="3" height="8"/></g><g fill="#1f5fb0"><rect x="1672" y="974" width="3" height="9"/><rect x="1676" y="974" width="3" height="9"/><rect x="1680" y="973" width="3" height="10"/></g>
<text x="1688" y="986" fill="#000" font-size="12.500" textLength="51" lengthAdjust="spacingAndGlyphs">3245/6 kb</text>

<!-- taskbar -->
<rect x="0" y="983" width="1795" height="39" fill="#1f2d3a"/>
<g transform="translate(0,1003)"><rect x="-12" y="-9" width="22" height="21" rx="2" fill="#e9eef2"/><rect x="-3" y="0" width="5" height="5" fill="#f25022"/><rect x="3" y="0" width="5" height="5" fill="#7fba00"/><rect x="-3" y="6" width="5" height="5" fill="#00a4ef"/><rect x="3" y="6" width="5" height="5" fill="#ffb900"/></g>
<use href="#rf" x="48" y="1003"/>
<g transform="translate(97,1003)"><rect x="-12" y="-4" width="24" height="15" fill="#1283d6"/><path d="M-12 -4L0 -11L12 -4L0 5Z" fill="#2fa3ea"/><path d="M-12 -4L0 5L12 -4" fill="none" stroke="#9fdcff" stroke-width="1.400"/></g>
<use href="#rf" x="146" y="1003"/>
<use href="#mt" x="195" y="1003"/>
<use href="#rf" x="244" y="1003"/>
<g transform="translate(293,1003)"><rect x="-10" y="-11" width="20" height="22" rx="3" fill="#111"/><rect x="-8" y="-9" width="16" height="8" fill="#e8743a"/><rect x="-8" y="-1" width="16" height="8" fill="#3f6fc4"/><path d="M3 -10L-2 8" stroke="#e8e8d8" stroke-width="3"/><path d="M-1 4L-2 9" stroke="#d22" stroke-width="3"/></g>
<g transform="translate(342,1003)"><circle r="12" fill="#3f7fd8" stroke="#a9c8f0"/><text x="-7.500" y="4.500" fill="#fff" font-size="13">qb</text></g>
<g transform="translate(391,1003)"><path d="M-11 -9H-2L0 -7H11V10H-11Z" fill="#f5c84a"/><rect x="-11" y="-4" width="22" height="3" fill="#ffe58c"/><rect x="-4" y="2" width="8" height="8" fill="#2a8ad4"/></g>
<use href="#rf" x="440" y="1003"/>
<use href="#mt" x="489" y="1003"/>
<g transform="translate(537,1000)"><path d="M-11 3L-6 -8L-1 0L4 -9L11 3Z" fill="#3a7a3a"/><path d="M-8 3L-3 -4L2 3Z" fill="#c2402a"/><text x="-11" y="15" fill="#8a9090" font-size="8.500" textLength="22" lengthAdjust="spacingAndGlyphs">alpari</text></g>
<g transform="translate(587,1003)" fill="none" stroke="#fff"><circle r="8.500" stroke-width="3" stroke-dasharray="3.300 3.400"/><circle r="6" stroke-width="2.600"/></g>
<use href="#mt" x="635" y="1003"/>
<use href="#rf" x="685" y="1003"/>
<use href="#rf" x="733.500" y="1003"/>
<use href="#mt" x="782" y="1003"/>
<use href="#mt" x="831" y="1003"/>
<path d="M881.500 992Q890 1006 889 1008A7.500 7.500 0 0 1 874 1008Q873 1006 881.500 992Z" fill="#4d8cc4"/>
<g transform="translate(930,1003)"><circle r="11.500" fill="#00aff0"/><text x="-6" y="6" fill="#fff" font-size="17" font-weight="bold">S</text></g>
<use href="#rf" x="979" y="1003"/>
<use href="#rf" x="1028" y="1003"/>
<g transform="translate(1077,1003)"><rect x="-8" y="-11" width="10" height="13" fill="#fff" transform="rotate(-12)"/><rect x="-2" y="-11" width="10" height="13" fill="#fff" transform="rotate(12)"/><path d="M-3 -6L-1 -3L-3 0L-5 -3Z" fill="#d01010"/><path d="M4 -7L6 -4L4 -1L2 -4Z" fill="#d01010"/><text x="-9" y="12" fill="#e01010" font-size="9" font-weight="bold" textLength="18" lengthAdjust="spacingAndGlyphs">1000</text></g>
<g transform="translate(1126,1003)"><rect x="-9" y="-11" width="18" height="22" fill="#6f7a84"/><rect x="-7" y="-9" width="14" height="5" fill="#7fd0f0"/><path d="M-7 -2H-3V2H-7ZM-1.500 -2H2V2H-1.500ZM3.500 -2H7V2H3.500ZM-7 3.500H-3V9H-7ZM-1.500 3.500H2V9H-1.500ZM3.500 3.500H7V9H3.500Z" fill="#2b4a7a"/></g>
<ellipse cx="1175" cy="1003" rx="8.500" ry="10.500" fill="none" stroke="#e0141c" stroke-width="5"/>
<use href="#mt" x="1224" y="1003"/>
<use href="#rf" x="1273" y="1003"/>
<use href="#mt" x="1321.500" y="1003"/>
<use href="#rf" x="1370" y="1003"/>
<use href="#mt" x="1419" y="1003"/>
<g fill="#76b9ed"><rect x="126" y="1021" width="40" height="1"/><rect x="518" y="1021" width="40" height="1"/><rect x="812" y="1021" width="40" height="1"/><rect x="1155" y="1021" width="41" height="1"/></g>
<path d="M1527 1006L1532 1001L1537 1006" fill="none" stroke="#eee" stroke-width="1.300"/>
<circle cx="1557" cy="1003" r="8" fill="#a8c020"/><path d="M1553 1003H1561M1557 999V1007" stroke="#fff03a" stroke-width="2.400"/>
<rect x="1570" y="983" width="22" height="39" fill="#4a5661"/>
<path d="M1576 1012Q1578 1000 1587 993Q1586 1004 1578 1011Z" fill="#9a6fd8"/>
<g fill="none" stroke="#e8e8e8" stroke-width="1.100"><rect x="1602" y="994" width="10" height="8"/><path d="M1603 1002V1011M1600 1011H1610"/><path d="M1625 1001H1628L1632 997V1010L1628 1006H1625ZM1634 1000Q1636 1003 1634 1007M1636 998Q1640 1003 1636 1009"/><path d="M1755 993H1771V1008H1766L1763 1012V1008H1755Z" stroke="#fff"/></g>
<text x="1648" y="1008" fill="#e8e8e8" font-size="12" textLength="22" lengthAdjust="spacingAndGlyphs">РУС</text>
<text x="1696" y="999" fill="#f0f0f0" font-size="13" textLength="27" lengthAdjust="spacingAndGlyphs">13:46</text>
<text x="1683" y="1017" fill="#f0f0f0" font-size="13" textLength="54" lengthAdjust="spacingAndGlyphs">31.01.2025</text>
<path d="M1583 1008V1022H1585L1587 1018L1590 1022H1593L1590 1017L1594 1017Z" fill="#fff" stroke="#000" stroke-width=".8"/>
</svg>
</body>
</html>
